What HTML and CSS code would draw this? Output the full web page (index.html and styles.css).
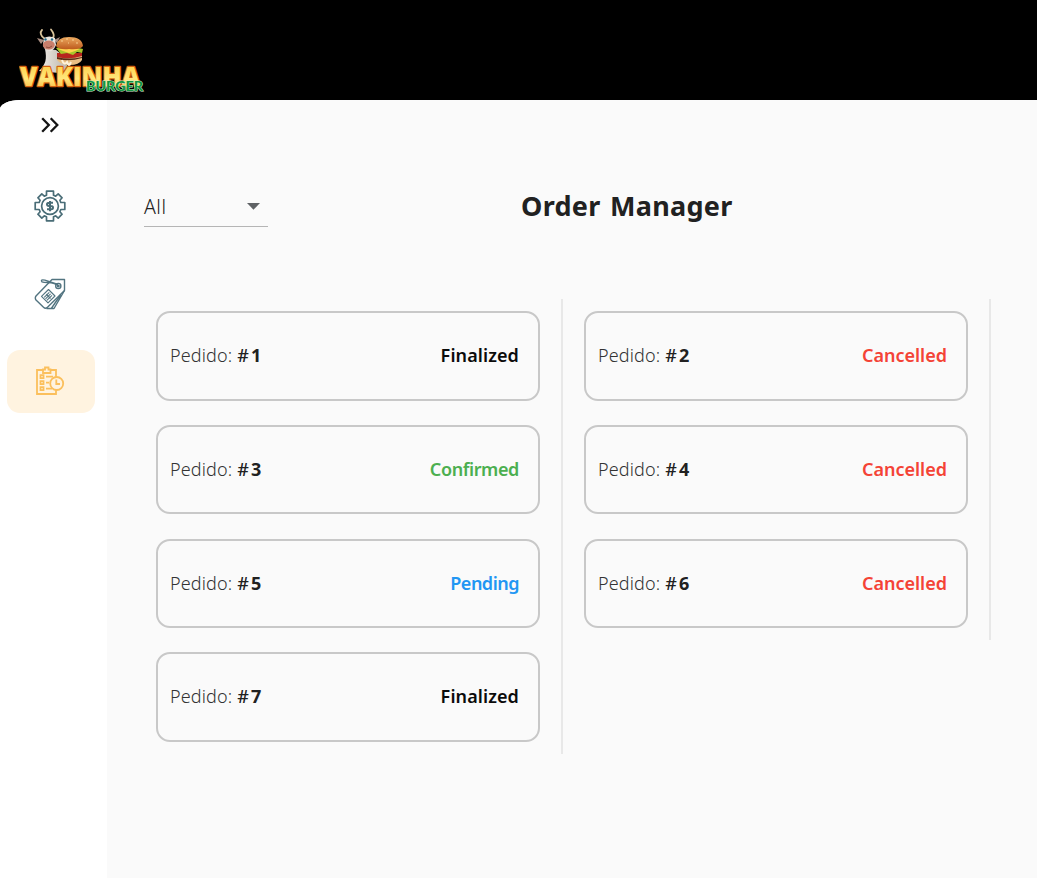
FILE: index.html
```html
<!DOCTYPE html>
<html lang="en">
<head>
<meta charset="utf-8">
<title>Order Manager</title>
<link rel="stylesheet" href="styles.css">
</head>
<body>
<header class="topbar">
  <svg class="logo" viewBox="0 0 130 68" role="img" aria-label="Vakinha Burger">
    <defs>
      <linearGradient id="gold" x1="0" y1="0" x2="0" y2="1"><stop offset="0" stop-color="#ffc42e"/><stop offset=".6" stop-color="#ffe77c"/><stop offset="1" stop-color="#f9a82a"/></linearGradient>
      <linearGradient id="bun" x1="0" y1="0" x2="0" y2="1"><stop offset="0" stop-color="#edaa60"/><stop offset="1" stop-color="#bd5a1d"/></linearGradient>
      <linearGradient id="hide" x1="0" y1="0" x2="1" y2="0"><stop offset="0" stop-color="#f2efea"/><stop offset="1" stop-color="#b9b2a8"/></linearGradient>
    </defs>
    <path d="M26 21C28 31 27 36 20 43L50 46 46 29 37 22Z" fill="url(#hide)"/>
    <path d="M26 11C21 8 21 4 23 2M32 11C37 9 34 4 32 1.5" fill="none" stroke="#d8c39a" stroke-width="1.8" stroke-linecap="round"/>
    <path d="M25 12L18 10 22 16ZM35 12L41 9 38 15Z" fill="#a88c80"/>
    <path d="M25 10Q30 7 36 10L37 17Q34 24 30 23 24 21 24 16Z" fill="#e9e4dd"/>
    <ellipse cx="29.8" cy="17" rx="6" ry="4.5" fill="#c97e6b"/>
    <circle cx="26.5" cy="11.5" r="1.2" fill="#226a88"/><circle cx="33" cy="11.5" r="1.2" fill="#226a88"/>
    <path d="M27 19Q30 21 33 18" fill="none" stroke="#854335" stroke-width=".8"/>
    <path d="M38 28H63V32Q60 37 51 37 42 37 38 32Z" fill="#e9bf83"/>
    <path d="M38 25H63V28Q51 32 38 29Z" fill="#b7251e"/>
    <path d="M38 29Q50 32 63 29V30Q50 34 38 31Z" fill="#5b2a18"/>
    <path d="M37 20Q50 17 64 21L63 25 58 24 54 27 48 25 42 26Z" fill="#a8c52b"/>
    <path d="M39 21L61 21 56 23 50 25 44 23Z" fill="#ffd34d"/>
    <path d="M37 18Q38 9 50 9 63 9 64 18 61 22 50 21 40 22 37 18Z" fill="url(#bun)"/>
    <path d="M42 13h2M47 11h2M53 12h2M57 15h2M49 15h1" stroke="#ffe0a2" stroke-width=".8"/>
    <path d="M43 32q2 6 5 2l2 4 2-4" fill="none" stroke="#fff3dc" stroke-width="2"/>
    <text class="logo-name" x="1" y="57.5" textLength="120" lengthAdjust="spacingAndGlyphs">VAKINHA</text>
    <text class="logo-sub" x="67" y="62.5" textLength="57" lengthAdjust="spacingAndGlyphs">BURGER</text>
  </svg>
</header>
<div class="shell">
  <nav class="sidebar">
    <a class="toggle"><svg width="20" height="18" viewBox="0 0 20 18"><path d="M2.2 2.2L8.8 9 2.2 15.8M10.7 2.2L17.3 9 10.7 15.8" fill="none" stroke="#151515" stroke-width="2.3"/></svg></a>
    <a class="item"><svg width="32" height="32" viewBox="0 0 32 32" fill="none" stroke="#4a6d77" stroke-width="1.7" stroke-linejoin="round">
      <path d="M12.5 5.2V1.2H19.5V5.2L21.7 6.1 24.2 3.9 28.1 7.8 25.9 10.3 26.8 12.5H30.8V19.5H26.8L25.9 21.7 28.1 24.2 24.2 28.1 21.7 25.9 19.5 26.8V30.8H12.5V26.8L10.3 25.9 7.8 28.1 3.9 24.2 6.1 21.7 5.2 19.5H1.2V12.5H5.2L6.1 10.3 3.9 7.8 7.8 3.9 10.3 6.1Z"/><circle cx="16" cy="16" r="8.4"/>
      <path d="M19 12.8H15Q13 12.8 13 14.3T15 15.9H17Q19 15.9 19 17.7T17 19.2H13M16 11V21.2" stroke-width="2"/></svg></a>
    <a class="item"><svg width="32" height="32" viewBox="0 0 32 32" fill="none" stroke="#527480" stroke-width="1.4" stroke-linejoin="round">
      <path d="M18 1.5H30.5V12.5L13.5 29.3Q11.5 31.2 9.5 29.3L2 22Q0.6 20 2 18Z"/>
      <path d="M30.5 12.5L20 30.5H12.5M26.5 17L17.3 30.5"/>
      <circle cx="24.3" cy="8" r="2.6"/><circle cx="24.3" cy="8" r=".8"/>
      <path d="M24.5 8C20 3 12 5.5 8 3.8 6 1 10 1.8 14 3.2L24 6.5"/>
      <path d="M14.5 11.5L21 18 14 24.8 7.5 18.3ZM12.3 16.2L16.5 20.5M15.3 14.3L10.2 19.4M18 17.3L12.8 22.4M16.6 15.8L11.5 20.9" stroke-width="1.1"/></svg></a>
    <a class="item active"><svg width="30" height="30" viewBox="0 0 30 30" fill="none" stroke="#fbbf5c" stroke-width="1.8">
      <path d="M8 4H2V28H21V24M15 4H21V11M8 7V3.5H10V1.5H13.5V3.5H15.5V7Z"/>
      <path d="M5.5 9.2h3v3h-3zM5.5 15.2h3v3h-3zM5.5 21.2h3v3h-3zM11 10.7h7M11 16.7h3M11 22.7h6"/>
      <circle cx="21.7" cy="17.5" r="6.5"/><path d="M21.3 13.5V18H25"/></svg></a>
  </nav>
  <main class="content">
    <div class="head">
      <div class="select"><span class="all">All</span><svg width="13" height="7" viewBox="0 0 13 7"><path d="M0 0H13L6.5 6.7Z" fill="#5f6265"/></svg></div>
      <h1 class="title">Order Manager</h1>
    </div>
    <div class="board">
      <section class="column">
        <article class="card"><span class="order">Pedido: <b class="hash">#</b><b class="num">1</b></span><span class="status finalized">Finalized</span></article>
        <article class="card"><span class="order">Pedido: <b class="hash">#</b><b class="num">3</b></span><span class="status confirmed">Confirmed</span></article>
        <article class="card"><span class="order">Pedido: <b class="hash">#</b><b class="num">5</b></span><span class="status pending">Pending</span></article>
        <article class="card"><span class="order">Pedido: <b class="hash">#</b><b class="num">7</b></span><span class="status finalized">Finalized</span></article>
      </section>
      <section class="column">
        <article class="card"><span class="order">Pedido: <b class="hash">#</b><b class="num">2</b></span><span class="status cancelled">Cancelled</span></article>
        <article class="card"><span class="order">Pedido: <b class="hash">#</b><b class="num">4</b></span><span class="status cancelled">Cancelled</span></article>
        <article class="card"><span class="order">Pedido: <b class="hash">#</b><b class="num">6</b></span><span class="status cancelled">Cancelled</span></article>
      </section>
    </div>
  </main>
</div>
</body>
</html>
```
FILE: styles.css
```css
* { box-sizing: border-box; }
body { margin: 0; background: #000; font-family: "Noto Sans", sans-serif; color: #212121; }
.topbar { height: 100px; padding: 28px 0 0 19px; background: #000; }
.logo { display: block; width: 130px; height: 68px; }
.logo-name { font: 800 27px "Open Sans", sans-serif; fill: url(#gold); stroke: #d2600f; stroke-width: 2.4; stroke-linejoin: round; paint-order: stroke; }
.logo-sub { font: 900 13px Lato, sans-serif; fill: #129540; stroke: #d8f0d2; stroke-width: 1; paint-order: stroke; }
.shell { display: flex; height: 778px; border-top-left-radius: 20px 9px; overflow: hidden; background: #fafafa; }
.sidebar { width: 106.6px; background: #fff; padding: 0 12px 0 6.6px; display: flex; flex-direction: column; align-items: center; gap: 24.6px; }
.toggle { height: 50px; display: flex; align-items: center; padding-right: 2px; }
.item { width: 88px; height: 63px; padding-right: 2px; border-radius: 13px; display: flex; align-items: center; justify-content: center; }
.active { background: #fff3e0; }
.content { flex: 1; padding: 84px 46px 0 37.4px; }
.head { height: 43px; display: flex; align-items: stretch; }
.select { width: 124px; border-bottom: 1px solid #b5b5b5; display: flex; align-items: center; justify-content: space-between; padding: 3px 8.4px 0 0; }
.select svg { margin-bottom: 1px; }
.all { font-size: 19.5px; font-weight: 300; line-height: 28px; letter-spacing: .5px; }
.title { margin: 0 0 0 253px; font-size: 27px; font-weight: 700; line-height: 43px; letter-spacing: .3px; word-spacing: 2px; white-space: nowrap; }
.board { display: flex; align-items: flex-start; gap: 9px; margin-top: 72px; }
.column { width: 419px; border-right: 2px solid #e8e8e8; padding: 12px 21px 12px 12px; display: flex; flex-direction: column; gap: 24.3px; }
.card { height: 89.5px; border: 2px solid #c8c8c8; border-radius: 14px; display: flex; align-items: center; justify-content: space-between; padding: 0 19px 1.4px 12px; font-size: 18px; }
.order { font-weight: 300; letter-spacing: .15px; color: #333; }
.hash { font-weight: 500; color: #212121; }
.num { font-weight: 700; margin-left: 2px; color: #212121; }
.status { font-weight: 600; }
.finalized { color: #0b0b0b; letter-spacing: .1px; }
.confirmed { color: #4caf50; letter-spacing: -.4px; }
.pending { color: #2196f3; letter-spacing: -.5px; }
.cancelled { color: #f44336; }
```
